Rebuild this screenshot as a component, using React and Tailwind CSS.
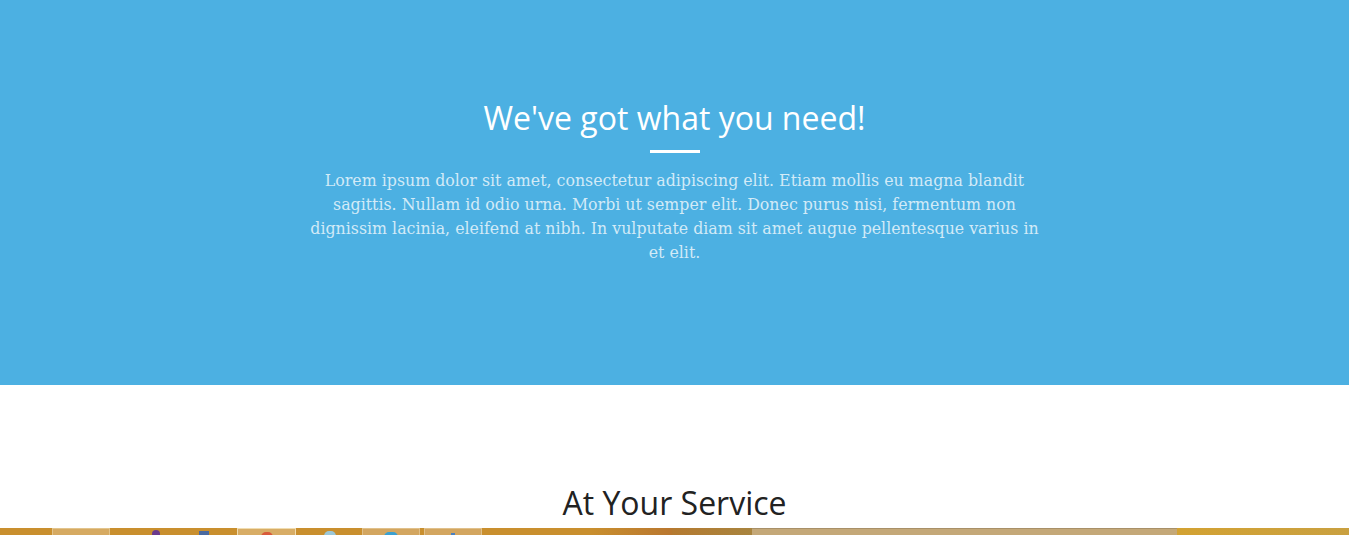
export default function App() {
  return (
    <div className="h-[535px] w-full overflow-hidden flex flex-col bg-white">
      <div className="flex-1 overflow-hidden">
        <section className="bg-[#4cb0e2] pt-[100px] pb-[100px] h-[385px]">
          <div className="mx-auto max-w-[760px] text-center">
            <h2
              className="text-white text-[32px] leading-[35px] font-normal"
              style={{ fontFamily: '"Open Sans", sans-serif' }}
            >
              We've got what you need!
            </h2>
            <div className="mx-auto mt-[15px] w-[50px] h-[3px] bg-white" />
            <p
              className="mt-[16px] text-[15.8px] leading-[24px] text-white/75 whitespace-nowrap"
              style={{ fontFamily: '"DejaVu Serif", serif' }}
            >
              Lorem ipsum dolor sit amet, consectetur adipiscing elit. Etiam mollis eu magna blandit
              <br />
              sagittis. Nullam id odio urna. Morbi ut semper elit. Donec purus nisi, fermentum non
              <br />
              dignissim lacinia, eleifend at nibh. In vulputate diam sit amet augue pellentesque varius in
              <br />
              et elit.
            </p>
          </div>
        </section>
        <section className="pt-[100px] text-center">
          <h2
            className="text-[#222] text-[32px] leading-[35px] font-normal"
            style={{ fontFamily: '"Open Sans", sans-serif' }}
          >
            At Your Service
          </h2>
        </section>
      </div>
      <div className="h-[7px] flex bg-[#c98f2e] overflow-hidden">
        <div className="w-[52px] shrink-0" />
        <div className="w-[58px] shrink-0 bg-[#d6aa62] border-t border-x border-[#e2c48c]" />
        <div className="w-[40px] shrink-0" />
        <div className="w-[12px] shrink-0 flex justify-center"><div className="mt-[2px] w-[8px] h-[8px] rounded-full bg-[#6a3a8c]" /></div>
        <div className="w-[36px] shrink-0" />
        <div className="w-[12px] shrink-0 flex justify-center"><div className="mt-[3px] w-[10px] h-[6px] bg-[#4a6aa0]" /></div>
        <div className="w-[27px] shrink-0" />
        <div className="w-[59px] shrink-0 bg-[#d8ad66] border-t border-x border-[#f0dcb0] flex justify-center"><div className="mt-[3px] w-[12px] h-[10px] rounded-full bg-[#d85a3a]" /></div>
        <div className="w-[28px] shrink-0" />
        <div className="w-[12px] shrink-0 flex justify-center"><div className="mt-[3px] w-[12px] h-[10px] rounded-full bg-[#9cc8d8]" /></div>
        <div className="w-[26px] shrink-0" />
        <div className="w-[58px] shrink-0 bg-[#d3a660] border-t border-x border-[#e0c08a] flex justify-center"><div className="mt-[3px] w-[14px] h-[10px] rounded-full bg-[#3aa0d0]" /></div>
        <div className="w-[4px] shrink-0" />
        <div className="w-[58px] shrink-0 bg-[#d3a660] border-t border-x border-[#e0c08a] flex justify-center"><div className="mt-[4px] w-[4px] h-[6px] bg-[#4a80c0]" /></div>
        <div className="w-[108px] shrink-0" />
        <div className="w-[82px] shrink-0 bg-gradient-to-r from-[#c98f2e] to-[#b9772f]" />
        <div className="w-[80px] shrink-0 bg-gradient-to-r from-[#b57a30] to-[#a8843e]" />
        <div className="w-[425px] shrink-0 bg-[#c4a878] border-t border-[#a89068]" />
        <div className="flex-1 bg-gradient-to-r from-[#d3a232] to-[#c9a040]" />
      </div>
    </div>
  );
}
